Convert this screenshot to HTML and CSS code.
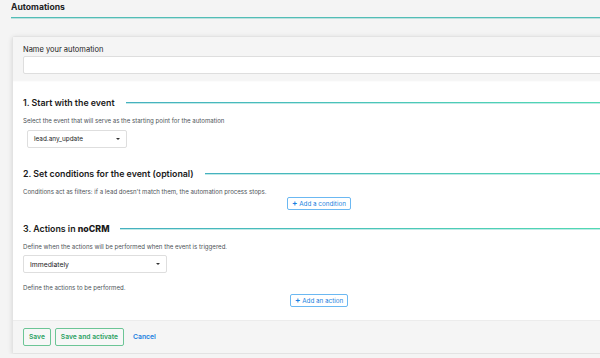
FILE: index.html
```html
<!DOCTYPE html>
<html lang="en">
<head>
    <meta charset="UTF-8">
    <meta name="viewport" content="width=device-width, initial-scale=1.0">
    <title>Automations</title>
    <link rel="stylesheet" href="styles.css">
</head>
<body>
    <div class="page-head">
        <h1>Automations</h1>
    </div>

    <div class="card">
        <div class="card-top">
            <label for="name">Name your automation</label>
            <input type="text" id="name" class="text-input">
        </div>

        <div class="card-body">
            <div class="step">
                <div class="step-head">
                    <h2 class="step-title">1. Start with the event</h2>
                    <div class="step-line"></div>
                </div>
                <p class="hint">Select the event that will serve as the starting point for the automation</p>
                <div class="select select-event">
                    <span>lead.any_update</span>
                    <span class="caret"></span>
                </div>
            </div>

            <div class="step">
                <div class="step-head">
                    <h2 class="step-title">2. Set conditions for the event (optional)</h2>
                    <div class="step-line"></div>
                </div>
                <p class="hint">Conditions act as filters: if a lead doesn't match them, the automation process stops.</p>
                <div class="add-row">
                    <button class="btn-add"><span class="plus">+</span> Add a condition</button>
                </div>
            </div>

            <div class="step">
                <div class="step-head">
                    <h2 class="step-title">3. Actions in <b>noCRM</b></h2>
                    <div class="step-line"></div>
                </div>
                <p class="hint">Define when the actions will be performed when the event is triggered.</p>
                <div class="select select-when">
                    <span>Immediately</span>
                    <span class="caret"></span>
                </div>
                <p class="hint hint-actions">Define the actions to be performed.</p>
                <div class="add-row add-action">
                    <button class="btn-add"><span class="plus">+</span> Add an action</button>
                </div>
            </div>
        </div>

        <div class="card-foot">
            <button class="btn-green">Save</button>
            <button class="btn-green">Save and activate</button>
            <a href="#" class="cancel">Cancel</a>
        </div>
    </div>
</body>
</html>
```

FILE: styles.css
```css
body {
    margin: 0;
    padding: 0 0 0 11px;
    background: #f4f4f4;
    font-family: Inter, "Noto Sans", sans-serif;
    color: #222;
    overflow: hidden;
}
.page-head {
    height: 17px;
    border-bottom: 1px solid #52bdb6;
    box-shadow: 0 1px 0 rgba(82, 189, 182, 0.35);
}
.page-head h1 {
    margin: 0;
    padding-top: 2px;
    font-size: 8.6px;
    font-weight: 700;
    line-height: 11px;
}
.card {
    margin: 18px -30px 0 1px;
    background: #fff;
    border: 1px solid #e3e3e3;
    border-radius: 3px;
    box-shadow: 0 1px 5px rgba(0, 0, 0, 0.12);
}
.card-top {
    background: #f5f5f5;
    padding: 8px 10px 6px 10px;
    display: flex;
    flex-direction: column;
    height: 29px;
}
.card-top label {
    font-size: 7.5px;
    line-height: 10px;
    color: #222;
    margin-bottom: 1px;
}
.text-input {
    height: 18px;
    box-sizing: border-box;
    border: 1px solid #dedede;
    border-radius: 2px;
    background: #fff;
    margin: 0;
}
.card-body {
    height: 240px;
    padding: 0 10px;
    box-shadow: inset 0 2px 2px -1px rgba(0, 0, 0, 0.05);
}
.step-head {
    display: flex;
    height: 13px;
}
.step-title {
    margin: 0;
    font-size: 8.8px;
    font-weight: 600;
    line-height: 13px;
    color: #1a1a1a;
    white-space: nowrap;
}
.step-title b {
    font-weight: 800;
}
.step-line {
    flex: 1;
    height: 1px;
    margin: 6px 0 0 11px;
    background: linear-gradient(to right, #45b0c0, #52dbb2);
    box-shadow: 0 1px 0 rgba(75, 194, 187, 0.35);
}
.step:nth-child(1) {
    padding-top: 16px;
}
.step:nth-child(2) {
    padding-top: 19px;
}
.step:nth-child(3) {
    padding-top: 12px;
}
.hint {
    margin: 0;
    font-size: 6.1px;
    line-height: 8px;
    color: #4d5358;
}
.step-head + .hint {
    margin-top: 8px;
}
.select {
    display: flex;
    align-items: center;
    justify-content: space-between;
    box-sizing: border-box;
    background: #fff;
    border: 1px solid #dedede;
    border-radius: 2px;
    color: #222;
    height: 18px;
    padding: 0 6px;
}
.select-event {
    width: 100px;
    margin: 5px 0 0 4px;
    font-size: 6.4px;
}
.select-when {
    width: 144px;
    margin-top: 4px;
    font-size: 6.8px;
}
.caret {
    width: 0;
    height: 0;
    border-left: 2px solid transparent;
    border-right: 2px solid transparent;
    border-top: 2px solid #333;
}
.add-row {
    display: flex;
    margin: 1px 0 0 264px;
}
.add-action {
    margin: 2px 0 0 267px;
}
.btn-add {
    font-family: inherit;
    font-size: 6.3px;
    line-height: 8px;
    color: #1b7fe0;
    background: #fff;
    border: 1px solid #6bb8f2;
    border-radius: 2px;
    padding: 1px 4px;
    height: 13px;
    cursor: pointer;
}
.plus {
    font-weight: 700;
    font-size: 8px;
}
.hint-actions {
    margin-top: 11px;
}
.card-foot {
    background: #f5f5f5;
    border-top: 1px solid #ececec;
    height: 33px;
    padding: 7px 10px 0 10px;
    box-sizing: border-box;
    display: flex;
    align-items: flex-start;
    gap: 4px;
}
.btn-green {
    font-family: inherit;
    font-size: 6.7px;
    font-weight: 600;
    color: #28a060;
    background: #f7f7f7;
    border: 1px solid #6cc596;
    border-radius: 2px;
    height: 18px;
    padding: 0 5px;
    cursor: pointer;
}
.cancel {
    font-size: 6.8px;
    font-weight: 600;
    color: #1b7fe0;
    text-decoration: none;
    line-height: 18px;
    margin-left: 5px;
}
```
